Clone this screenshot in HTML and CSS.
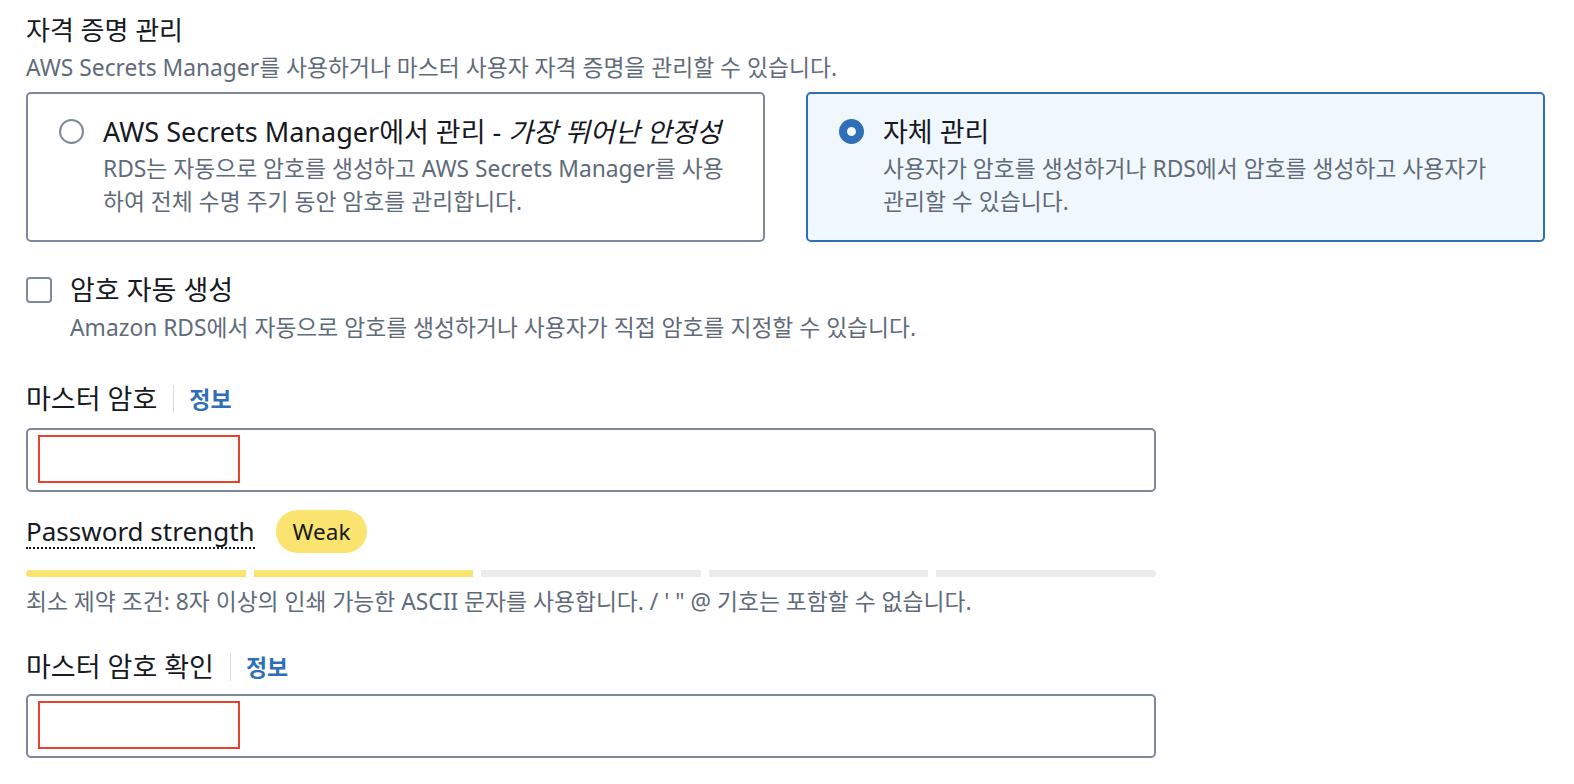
FILE: index.html
```html
<!DOCTYPE html>
<html lang="ko">
<head>
<meta charset="utf-8">
<link rel="stylesheet" href="styles.css">
</head>
<body>
<div class="page">
  <h2 class="title">자격 증명 관리</h2>
  <p class="desc">AWS Secrets Manager를 사용하거나 마스터 사용자 자격 증명을 관리할 수 있습니다.</p>

  <div class="cards">
    <div class="card">
      <span class="radio"></span>
      <div class="card-body">
        <div class="card-label">AWS Secrets Manager에서 관리 - <em>가장 뛰어난 안정성</em></div>
        <div class="card-desc">RDS는 자동으로 암호를 생성하고 AWS Secrets Manager를 사용<br>하여 전체 수명 주기 동안 암호를 관리합니다.</div>
      </div>
    </div>
    <div class="card card-selected">
      <span class="radio radio-on"></span>
      <div class="card-body">
        <div class="card-label">자체 관리</div>
        <div class="card-desc">사용자가 암호를 생성하거나 RDS에서 암호를 생성하고 사용자가<br>관리할 수 있습니다.</div>
      </div>
    </div>
  </div>

  <div class="check-row">
    <span class="checkbox"></span>
    <span class="check-label">암호 자동 생성</span>
  </div>
  <p class="check-desc">Amazon RDS에서 자동으로 암호를 생성하거나 사용자가 직접 암호를 지정할 수 있습니다.</p>

  <div class="field-label"><span>마스터 암호</span><span class="sep"></span><a class="info">정보</a></div>
  <div class="input"><span class="mark"></span></div>

  <div class="strength-row">
    <span class="strength-text">Password strength</span>
    <span class="badge">Weak</span>
  </div>
  <div class="bars">
    <span class="bar on"></span><span class="bar on"></span><span class="bar"></span><span class="bar"></span><span class="bar"></span>
  </div>
  <p class="hint">최소 제약 조건: 8자 이상의 인쇄 가능한 ASCII 문자를 사용합니다. / ' " @ 기호는 포함할 수 없습니다.</p>

  <div class="field-label label2"><span>마스터 암호 확인</span><span class="sep"></span><a class="info">정보</a></div>
  <div class="input"><span class="mark"></span></div>
</div>
</body>
</html>
```

FILE: styles.css
```css
* { box-sizing: border-box; }
html, body { margin: 0; padding: 0; background: #fff; }
body {
  font-family: "Noto Sans", "Noto Sans CJK KR", sans-serif;
  color: #16191f;
}
.page { padding: 0 0 0 26px; }
.title {
  margin: 14px 0 0;
  font-size: 26px;
  line-height: 32px;
  font-weight: 400;
}
.desc {
  margin: 7px 0 0;
  font-size: 22.8px;
  line-height: 30px;
  color: #5f6b7a;
}
.cards {
  display: flex;
  gap: 41px;
  margin-top: 9px;
}
.card {
  width: 739px;
  height: 150px;
  border: 2px solid #7d8998;
  border-radius: 5px;
  padding: 21px 20px 0 31px;
  display: flex;
  align-items: flex-start;
  gap: 19px;
}
.card-selected {
  border-color: #2f6fb7;
  background: #f1f8fd;
}
.radio {
  flex: none;
  width: 25px;
  height: 25px;
  margin-top: 4px;
  border: 2px solid #7d8998;
  border-radius: 50%;
}
.radio-on {
  border: 8px solid #2f6fb7;
}
.card-label {
  font-size: 27px;
  line-height: 34px;
  white-space: nowrap;
}
.card-label em { font-style: italic; }
.card-desc {
  margin-top: 3px;
  font-size: 22.8px;
  line-height: 33px;
  color: #5f6b7a;
  white-space: nowrap;
}
.check-row {
  display: flex;
  align-items: center;
  gap: 18px;
  margin-top: 31px;
}
.checkbox {
  width: 26px;
  height: 26px;
  border: 2px solid #7d8998;
  border-radius: 4px;
}
.check-label {
  font-size: 27px;
  line-height: 34px;
}
.check-desc {
  margin: 6px 0 0 44px;
  font-size: 22.8px;
  line-height: 30px;
  color: #5f6b7a;
}
.field-label {
  display: flex;
  align-items: center;
  margin-top: 39px;
  font-size: 27px;
  line-height: 34px;
}
.label2 { margin-top: 33px; }
.sep {
  width: 1px;
  height: 28px;
  background: #d9dde2;
  margin: 0 15px 0 16px;
}
.info {
  font-size: 23px;
  font-weight: 700;
  color: #2f6fb7;
}
.input {
  width: 1130px;
  height: 64px;
  margin-top: 12px;
  border: 2px solid #7d8998;
  border-radius: 5px;
  padding: 5px 0 0 10px;
}
.label2 + .input { margin-top: 10px; }
.mark {
  display: block;
  width: 202px;
  height: 48px;
  border: 2px solid #e8412d;
}
.strength-row {
  display: flex;
  align-items: center;
  gap: 21px;
  margin-top: 18px;
  height: 43px;
}
.strength-text {
  font-size: 26px;
  line-height: 32px;
  border-bottom: 2px dotted #16191f;
}
.badge {
  height: 43px;
  padding: 0 17px;
  border-radius: 22px;
  background: #fbe36f;
  font-size: 22.5px;
  line-height: 43px;
}
.bars {
  display: flex;
  gap: 8px;
  width: 1130px;
  height: 7px;
  margin-top: 17px;
  border-radius: 4px;
  overflow: hidden;
}
.bar {
  flex: 1;
  background: #e9ebed;
}
.bar.on { background: #fbe36f; }
.hint {
  margin: 10px 0 0;
  font-size: 22.8px;
  line-height: 30px;
  color: #5f6b7a;
}
```
